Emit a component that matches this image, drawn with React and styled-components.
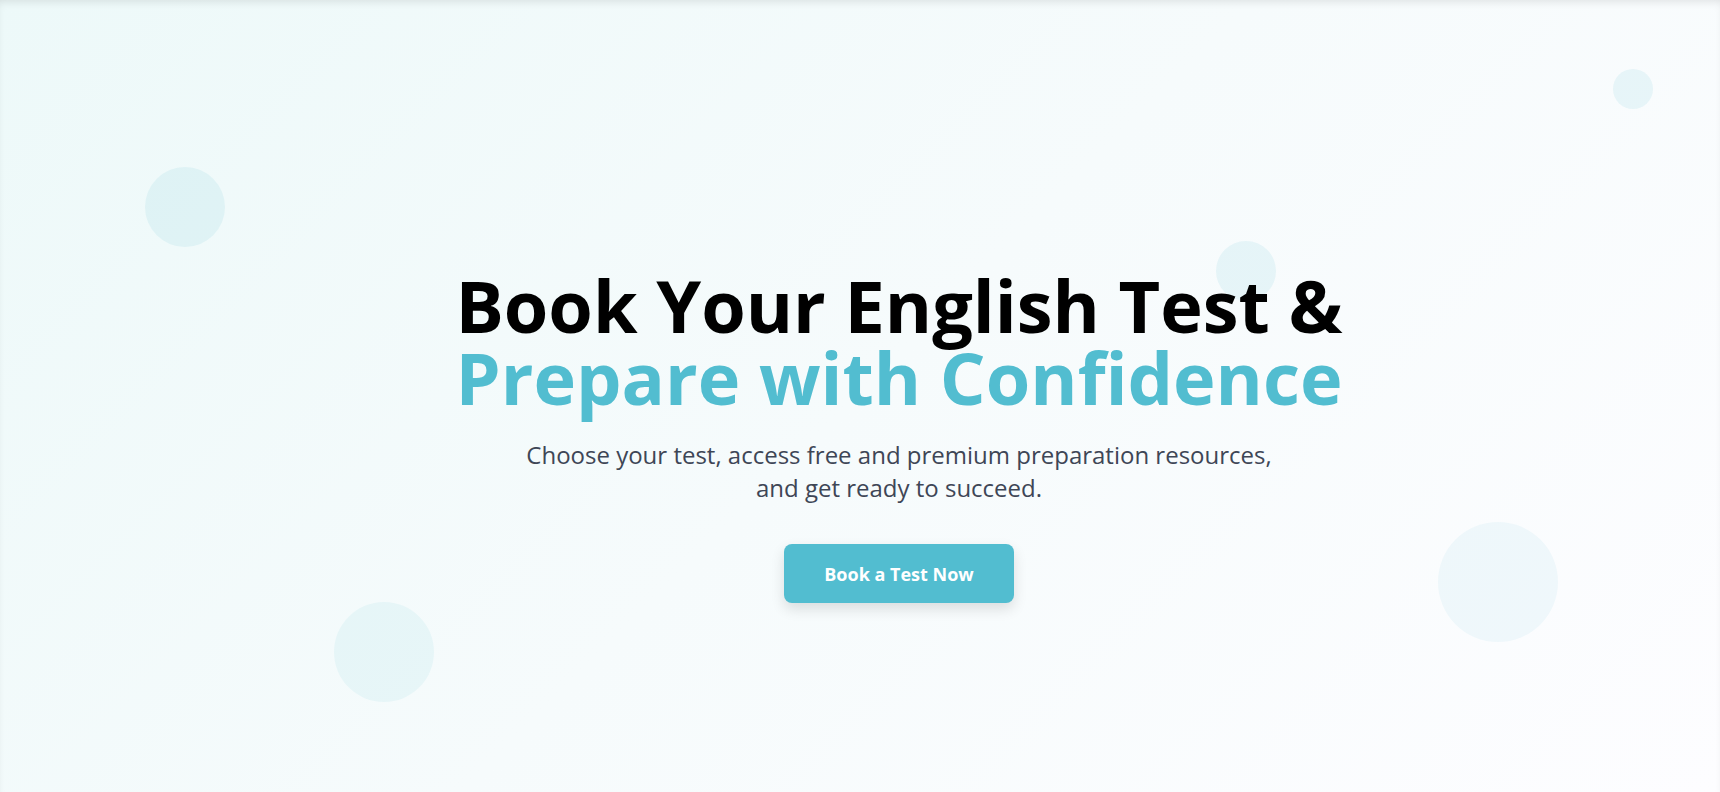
import React from "react";
import styled, { createGlobalStyle } from "styled-components";

const GlobalStyle = createGlobalStyle`
  * { box-sizing: border-box; }
  html, body {
    margin: 0;
    padding: 0;
    font-family: "Open Sans", "Noto Sans", sans-serif;
  }
`;

const Hero = styled.section`
  position: relative;
  overflow: hidden;
  height: 792px;
  padding: 80px 0 0 78px;
  display: flex;
  align-items: center;
  justify-content: center;
  background: linear-gradient(135deg, #edf9f9 0%, #f6fbfc 50%, #fdfdff 100%);
  box-shadow: inset 0 5px 10px -4px rgba(0, 0, 0, 0.12);
`;

const Bubble = styled.span`
  position: absolute;
  border-radius: 50%;
  width: ${(p) => p.size}px;
  height: ${(p) => p.size}px;
  left: ${(p) => p.x}px;
  top: ${(p) => p.y}px;
  background: rgba(82, 189, 208, ${(p) => p.alpha});
`;

const Content = styled.div`
  position: relative;
  z-index: 1;
  display: flex;
  flex-direction: column;
  align-items: center;
  text-align: center;
`;

const Title = styled.h1`
  margin: 0;
  font-size: 72px;
  line-height: 72px;
  font-weight: 700;
  color: #000;
`;

const Accent = styled.span`
  display: block;
  color: #52bdd0;
`;

const Subtitle = styled.p`
  margin: 25px 0 0;
  max-width: 770px;
  font-size: 24px;
  line-height: 33px;
  color: #3e4656;
`;

const Cta = styled.button`
  margin-top: 40px;
  width: 230px;
  height: 59px;
  border: none;
  border-radius: 8px;
  background: #52bdd0;
  color: #fff;
  font-family: inherit;
  font-size: 18px;
  font-weight: 700;
  cursor: pointer;
  box-shadow: 0 6px 14px rgba(0, 0, 0, 0.12);
`;

const bubbles = [
  { x: 145, y: 167, size: 80, alpha: 0.1 },
  { x: 1216, y: 241, size: 60, alpha: 0.1 },
  { x: 1613, y: 69, size: 40, alpha: 0.1 },
  { x: 334, y: 602, size: 100, alpha: 0.08 },
  { x: 1438, y: 522, size: 120, alpha: 0.07 },
];

export default function App() {
  return (
    <>
      <GlobalStyle />
      <Hero>
        {bubbles.map((b, i) => (
          <Bubble key={i} {...b} />
        ))}
        <Content>
          <Title>
            Book Your English Test &amp;
            <Accent>Prepare with Confidence</Accent>
          </Title>
          <Subtitle>
            Choose your test, access free and premium preparation resources,
            and get ready to succeed.
          </Subtitle>
          <Cta>Book a Test Now</Cta>
        </Content>
      </Hero>
    </>
  );
}
